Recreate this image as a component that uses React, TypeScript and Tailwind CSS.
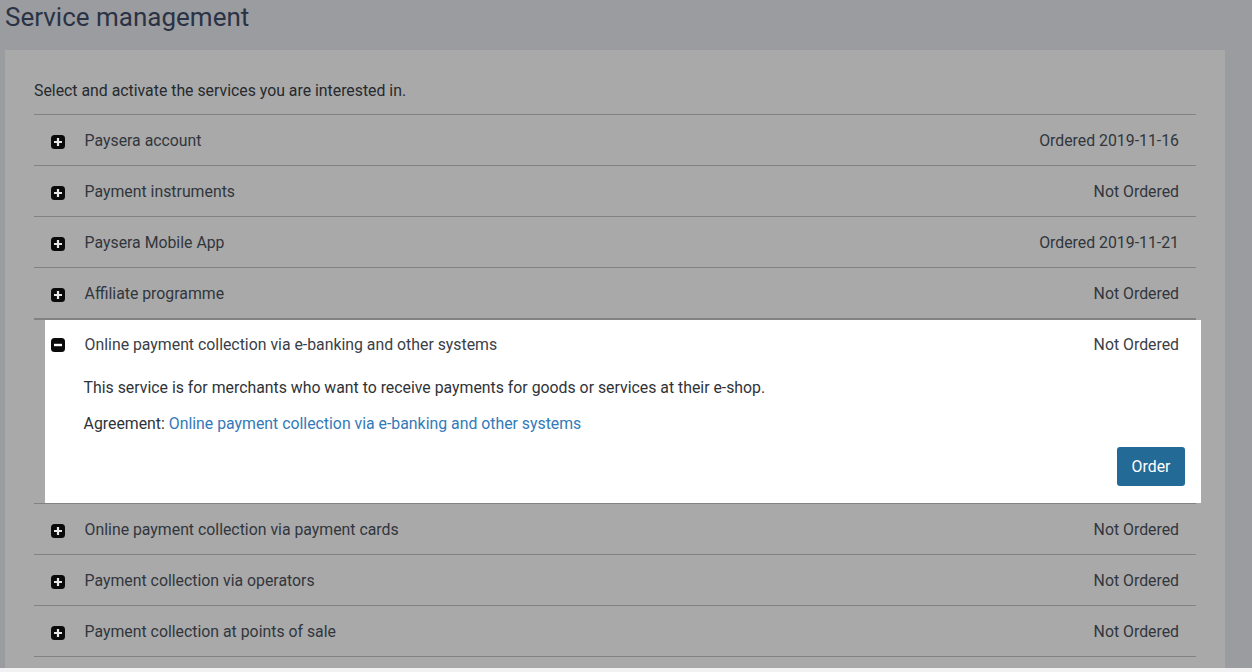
import React from "react";

const Icon = ({ minus }: { minus?: boolean }) => (
  <svg width="14" height="14" viewBox="0 0 14 14" className={minus ? "mt-[1px] shrink-0" : "mt-[3px] shrink-0"}>
    <rect x="0" y="0" width="14" height="14" rx="3.5" fill="#0a0a0a" />
    {minus ? (
      <rect x="3" y="5.8" width="8" height="2.4" fill="#fff" />
    ) : (
      <path d="M5.9 3h2.2v2.9H11v2.2H8.1V11H5.9V8.1H3V5.9h2.9z" fill="#e8e8e8" />
    )}
  </svg>
);

const Row = ({ name, status }: { name: string; status: string }) => (
  <div className="flex h-[51px] items-center border-b border-[#828282] pl-[17px] pr-[17px]">
    <Icon />
    <span className="ml-[19.6px] pt-[1px] text-[#31363d]">{name}</span>
    <span className="ml-auto pt-[1px] text-[#31363d]">{status}</span>
  </div>
);

export default function App() {
  return (
    <div className="h-[672px] w-[1252px] overflow-hidden bg-[#9b9ca0] font-['Roboto',sans-serif] text-[15.84px]">
      <div className="h-[50px] pl-[5px] text-[26px] leading-[34px] text-[#2a3345]">Service management</div>
      <div className="ml-[5px] h-[618px] w-[1220px] bg-[#a9a9a9] pl-[29px] pr-[29px]">
        <div className="flex h-[65px] items-end border-b border-[#828282] pb-[13px] leading-[20px] text-[#26292e]">
          Select and activate the services you are interested in.
        </div>
        <Row name="Paysera account" status="Ordered 2019-11-16" />
        <Row name="Payment instruments" status="Not Ordered" />
        <Row name="Paysera Mobile App" status="Ordered 2019-11-21" />
        <Row name="Affiliate programme" status="Not Ordered" />
        <div className="border-t border-[#828282]">
          <div className="-mr-[5px] ml-[11px] h-[183px] bg-white pl-[6px] pr-[16px]">
            <div className="flex h-[49px] items-center pr-[6px]">
              <Icon minus />
              <span className="ml-[19.6px] text-[#3a4047]">Online payment collection via e-banking and other systems</span>
              <span className="ml-auto text-[#3a4047]">Not Ordered</span>
            </div>
            <p className="ml-[32.6px] mt-[9px] leading-[20px] text-[#2f3338]">
              This service is for merchants who want to receive payments for goods or services at their e-shop.
            </p>
            <p className="ml-[32.6px] mt-[16px] leading-[20px] text-[#2f3338]">
              Agreement: <a className="text-[#337ab7]">Online payment collection via e-banking and other systems</a>
            </p>
            <div className="mt-[13px] flex justify-end">
              <button className="h-[39px] w-[68px] rounded-[3px] bg-[#246a96] text-white">Order</button>
            </div>
          </div>
        </div>
        <div className="border-t border-[#828282]">
          <Row name="Online payment collection via payment cards" status="Not Ordered" />
        </div>
        <Row name="Payment collection via operators" status="Not Ordered" />
        <Row name="Payment collection at points of sale" status="Not Ordered" />
      </div>
      <div className="h-[4px] bg-[#f2f2f2]" />
    </div>
  );
}
